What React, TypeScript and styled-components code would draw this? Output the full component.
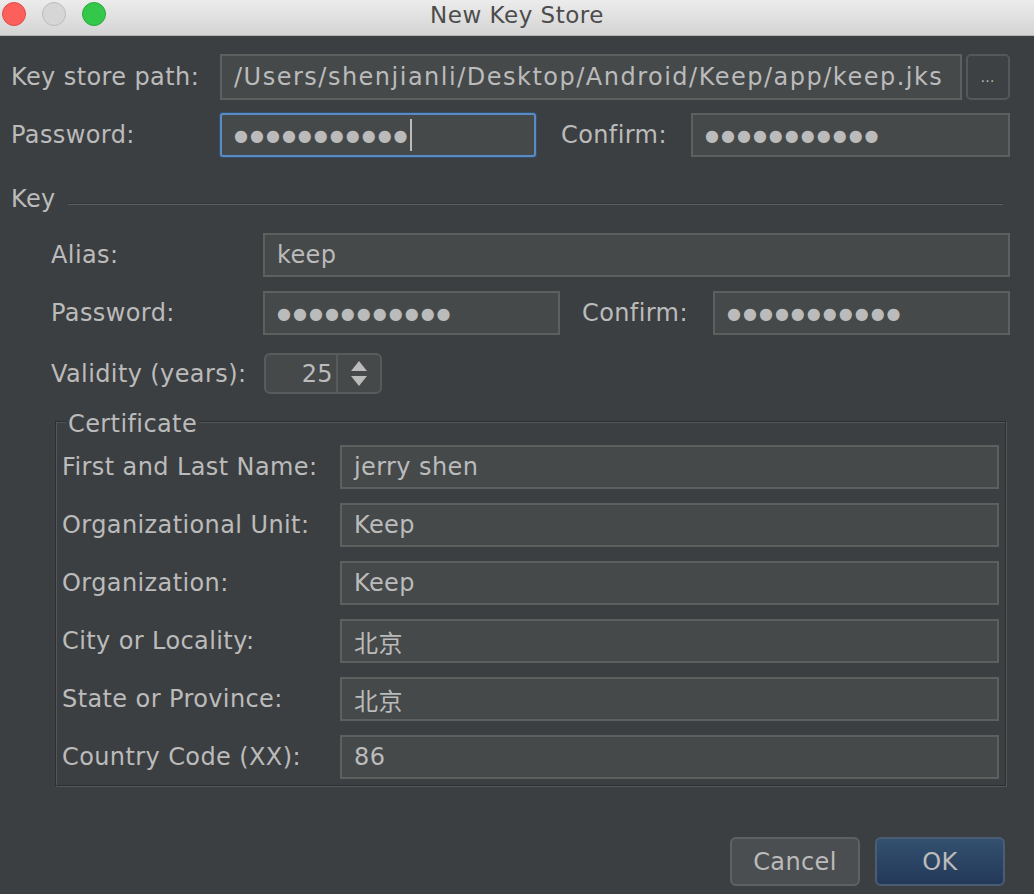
import React from "react";
import styled, { createGlobalStyle } from "styled-components";

const Global = createGlobalStyle`
  html, body { margin: 0; padding: 0; background: #3c3f41; }
  * { box-sizing: border-box; }
`;

const Window = styled.div`
  width: 1034px;
  height: 894px;
  background: #3c3f41;
  font-family: "DejaVu Sans", "Noto Sans CJK SC", sans-serif;
  font-size: 24px;
  letter-spacing: 0.4px;
  color: #bbbbbb;
  display: flex;
  flex-direction: column;
  overflow: hidden;
`;

const TitleBar = styled.div`
  height: 36px;
  flex: none;
  position: relative;
  background: linear-gradient(#ececec, #d4d4d4);
  border-bottom: 1px solid #b4b4b4;
  display: flex;
  align-items: center;
  justify-content: center;
`;

const Lights = styled.div`
  position: absolute;
  left: 2px;
  top: 2px;
  display: flex;
  gap: 16px;
`;

const Light = styled.span<{ $c: string; $b: string }>`
  width: 24px;
  height: 24px;
  border-radius: 50%;
  background: ${(p) => p.$c};
  border: 1px solid ${(p) => p.$b};
`;

const Title = styled.div`
  font-family: "DejaVu Sans", "Liberation Sans", sans-serif;
  font-size: 23px;
  letter-spacing: 0.5px;
  color: #4c4c4c;
  margin-top: -5px;
`;

const Body = styled.div`
  flex: 1;
  display: flex;
  flex-direction: column;
  padding: 18px 24px 0 11px;
`;

const Row = styled.div<{ $cols: string; $mt?: number }>`
  display: grid;
  grid-template-columns: ${(p) => p.$cols};
  align-items: center;
  margin-top: ${(p) => p.$mt ?? 0}px;
`;

const Label = styled.label<{ $pl?: number }>`
  white-space: nowrap;
  line-height: 1;
  padding-left: ${(p) => p.$pl ?? 0}px;
`;

const Field = styled.div<{ $h?: number; $wide?: boolean }>`
  height: ${(p) => p.$h ?? 44}px;
  background: #45494a;
  border: 2px solid #5e6060;
  display: flex;
  align-items: center;
  padding: 0 12px;
  white-space: nowrap;
  overflow: hidden;
  letter-spacing: ${(p) => (p.$wide ? "1.5px" : "0.4px")};
`;

const FocusField = styled(Field)`
  border: 2px solid #5a8bc4;
  border-radius: 3px;
  box-shadow: 0 0 0 1px #35506f;
`;

const Dots = styled.span`
  font-size: 16px;
  letter-spacing: 2px;
  display: inline-flex;
  align-items: center;
`;

const Caret = styled.span`
  width: 2px;
  height: 32px;
  background: #bbbbbb;
`;

const BrowseButton = styled.div`
  height: 46px;
  margin-left: 4px;
  border: 2px solid #555859;
  border-radius: 5px;
  background: #3e4143;
  display: flex;
  align-items: center;
  justify-content: center;
  font-size: 14px;
  letter-spacing: 1px;
`;

const SectionHead = styled.div`
  display: flex;
  align-items: center;
  margin-top: 30px;
  gap: 12px;
  padding-right: 7px;
`;

const Separator = styled.div`
  flex: 1;
  height: 2px;
  border-top: 1px solid #333537;
  border-bottom: 1px solid #5b5e60;
  margin-top: 10px;
`;

const KeySection = styled.div`
  display: flex;
  flex-direction: column;
  padding-left: 40px;
  margin-top: 22px;
`;

const Spinner = styled.div`
  width: 118px;
  height: 41px;
  border: 2px solid #585b5c;
  border-radius: 6px;
  background: #45494a;
  display: grid;
  grid-template-columns: 1fr 42px;
`;

const SpinValue = styled.div`
  display: flex;
  align-items: center;
  justify-content: flex-end;
  padding-right: 3px;
  border-right: 2px solid #585b5c;
`;

const SpinArrows = styled.div`
  display: flex;
  flex-direction: column;
  align-items: center;
  justify-content: center;
  gap: 5px;
`;

const Group = styled.fieldset`
  margin: 12px 0 0 4px;
  padding: 0 6px 6px 6px;
  width: 951px;
  border: 1px solid #2c2e30;
  box-shadow: inset 1px 1px 0 #54575a, 1px 1px 0 #54575a;
  min-width: 0;
`;

const Legend = styled.legend`
  padding: 6px 2px 0 2px;
  margin-left: 4px;
  line-height: 1;
  background: #3c3f41;
`;

const CertRows = styled.div`
  display: flex;
  flex-direction: column;
  gap: 14px;
  margin-top: 9px;
`;

const Footer = styled.div`
  margin-top: auto;
  display: flex;
  justify-content: flex-end;
  gap: 15px;
  padding: 0 5px 8px 0;
`;

const Button = styled.button<{ $primary?: boolean }>`
  width: 130px;
  height: 49px;
  border-radius: 6px;
  font-family: inherit;
  font-size: 24px;
  letter-spacing: 0.4px;
  color: #bbbbbb;
  border: 2px solid ${(p) => (p.$primary ? "#4a5d75" : "#5e6162")};
  background: ${(p) =>
    p.$primary ? "linear-gradient(#33506f, #24395a)" : "#4a4e50"};
  padding: 0;
`;

const dots = (n: number) => "●".repeat(n);

const ArrowIcon = ({ up }: { up?: boolean }) => (
  <svg width="16" height="10" viewBox="0 0 16 10">
    <polygon points={up ? "8,0 16,10 0,10" : "0,0 16,0 8,10"} fill="#bbbbbb" />
  </svg>
);

const certRows: [string, string][] = [
  ["First and Last Name:", "jerry shen"],
  ["Organizational Unit:", "Keep"],
  ["Organization:", "Keep"],
  ["City or Locality:", "北京"],
  ["State or Province:", "北京"],
  ["Country Code (XX):", "86"],
];

export default function App() {
  return (
    <>
      <Global />
      <Window>
        <TitleBar>
          <Lights>
            <Light $c="#fc605c" $b="#de4c47" />
            <Light $c="#d6d6d6" $b="#bcbcbc" />
            <Light $c="#34c84a" $b="#2aa83b" />
          </Lights>
          <Title>New Key Store</Title>
        </TitleBar>
        <Body>
          <Row $cols="209px 1fr 48px">
            <Label>Key store path:</Label>
            <Field $h={46} $wide>
              /Users/shenjianli/Desktop/Android/Keep/app/keep.jks
            </Field>
            <BrowseButton>…</BrowseButton>
          </Row>
          <Row $cols="209px 316px 155px 1fr" $mt={13}>
            <Label>Password:</Label>
            <FocusField>
              <Dots>{dots(11)}</Dots>
              <Caret />
            </FocusField>
            <Label $pl={25}>Confirm:</Label>
            <Field>
              <Dots>{dots(11)}</Dots>
            </Field>
          </Row>

          <SectionHead>
            <Label>Key</Label>
            <Separator />
          </SectionHead>

          <KeySection>
            <Row $cols="212px 1fr">
              <Label>Alias:</Label>
              <Field>keep</Field>
            </Row>
            <Row $cols="212px 297px 153px 1fr" $mt={14}>
              <Label>Password:</Label>
              <Field>
                <Dots>{dots(11)}</Dots>
              </Field>
              <Label $pl={22}>Confirm:</Label>
              <Field>
                <Dots>{dots(11)}</Dots>
              </Field>
            </Row>
            <Row $cols="213px 118px" $mt={18}>
              <Label>Validity (years):</Label>
              <Spinner>
                <SpinValue>25</SpinValue>
                <SpinArrows>
                  <ArrowIcon up />
                  <ArrowIcon />
                </SpinArrows>
              </Spinner>
            </Row>

            <Group>
              <Legend>Certificate</Legend>
              <CertRows>
                {certRows.map(([l, v]) => (
                  <Row $cols="278px 1fr" key={l}>
                    <Label>{l}</Label>
                    <Field>{v}</Field>
                  </Row>
                ))}
              </CertRows>
            </Group>
          </KeySection>

          <Footer>
            <Button>Cancel</Button>
            <Button $primary>OK</Button>
          </Footer>
        </Body>
      </Window>
    </>
  );
}
